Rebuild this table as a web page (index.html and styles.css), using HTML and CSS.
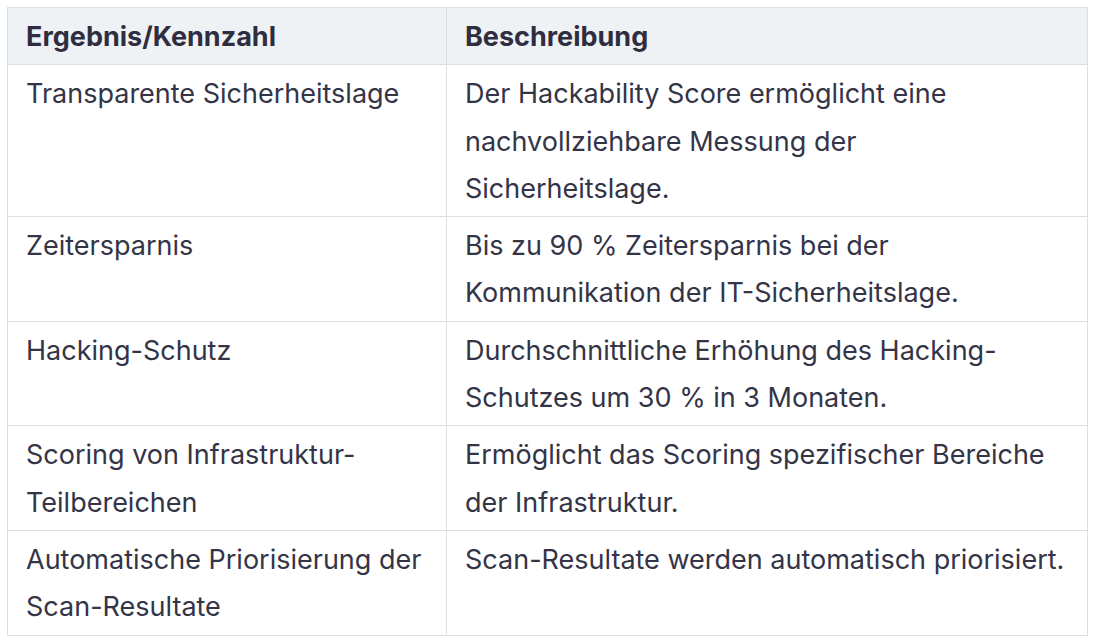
FILE: index.html
```html
<!DOCTYPE html>
<html lang="de">
<head>
<meta charset="utf-8">
<link rel="stylesheet" href="styles.css">
</head>
<body>
<table class="results">
  <colgroup><col class="c1"><col class="c2"></colgroup>
  <thead>
    <tr><th>Ergebnis/Kennzahl</th><th>Beschreibung</th></tr>
  </thead>
  <tbody>
    <tr><td>Transparente Sicherheitslage</td><td>Der Hackability Score ermöglicht eine nachvollziehbare Messung der Sicherheitslage.</td></tr>
    <tr><td>Zeitersparnis</td><td>Bis zu 90 % Zeitersparnis bei der Kommunikation der IT-Sicherheitslage.</td></tr>
    <tr><td>Hacking-Schutz</td><td>Durchschnittliche Erhöhung des Hacking-Schutzes um 30 % in 3 Monaten.</td></tr>
    <tr><td>Scoring von Infrastruktur-Teilbereichen</td><td>Ermöglicht das Scoring spezifischer Bereiche der Infrastruktur.</td></tr>
    <tr><td>Automatische Priorisierung der Scan-Resultate</td><td>Scan-Resultate werden automatisch priorisiert.</td></tr>
  </tbody>
</table>
</body>
</html>
```
FILE: styles.css
```css
html, body { margin: 0; padding: 0; background: #fff; }
body { padding: 7px 9px 0 7px; }
.results {
  border-collapse: collapse;
  width: 1080px;
  table-layout: fixed;
  font-family: Inter, "Noto Sans", sans-serif;
  font-size: 27px;
  line-height: 47.3px;
  color: #343447;
}
.results .c1 { width: 439px; }
.results .c2 { width: 641px; }
.results th, .results td {
  border: 1px solid #dedee2;
  padding: 5px 20px 4px 18px;
  text-align: left;
  vertical-align: top;
}
.results th {
  background: #eff2f5;
  font-weight: 700;
  color: #2f2e41;
}
.results td { font-weight: 400; }
```
